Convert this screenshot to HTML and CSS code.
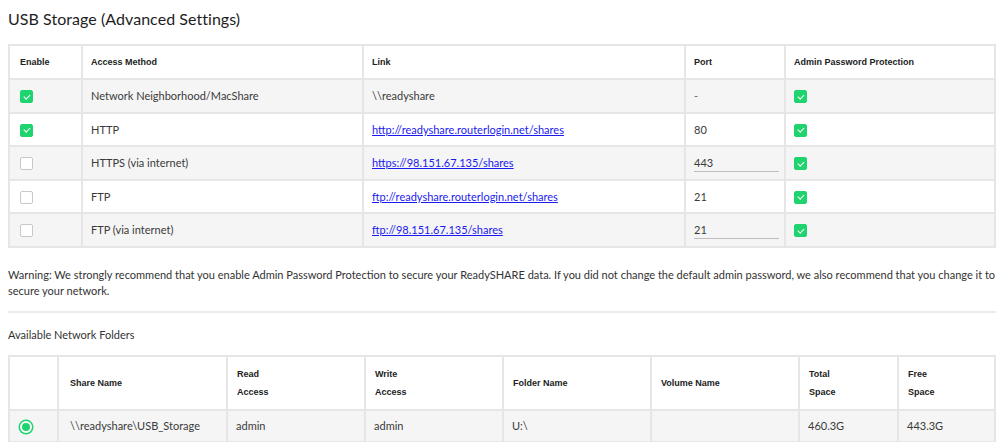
FILE: index.html
```html
<!DOCTYPE html>
<html>
<head>
<meta charset="utf-8">
<link rel="stylesheet" href="styles.css">
</head>
<body>
<div class="page">
  <h1 class="title">USB Storage (Advanced Settings)</h1>
  <table class="grid methods">
    <colgroup>
      <col style="width:73px"><col style="width:281px"><col style="width:322px"><col style="width:100px"><col>
    </colgroup>
    <thead>
      <tr><th class="first">Enable</th><th>Access Method</th><th>Link</th><th>Port</th><th>Admin Password Protection</th></tr>
    </thead>
    <tbody>
      <tr class="alt"><td class="first"><span class="cb on"></span></td><td>Network Neighborhood/MacShare</td><td>\\readyshare</td><td class="dash">-</td><td><span class="cb on"></span></td></tr>
      <tr><td class="first"><span class="cb on"></span></td><td>HTTP</td><td><a href="#">http://readyshare.routerlogin.net/shares</a></td><td>80</td><td><span class="cb on"></span></td></tr>
      <tr class="alt"><td class="first"><span class="cb"></span></td><td>HTTPS (via internet)</td><td><a href="#">https://98.151.67.135/shares</a></td><td><span class="port">443</span></td><td><span class="cb on"></span></td></tr>
      <tr><td class="first"><span class="cb"></span></td><td>FTP</td><td><a href="#">ftp://readyshare.routerlogin.net/shares</a></td><td>21</td><td><span class="cb on"></span></td></tr>
      <tr class="alt"><td class="first"><span class="cb"></span></td><td>FTP (via internet)</td><td><a href="#">ftp://98.151.67.135/shares</a></td><td><span class="port">21</span></td><td><span class="cb on"></span></td></tr>
    </tbody>
  </table>
  <p class="warning">Warning: We strongly recommend that you enable Admin Password Protection to secure your ReadySHARE data. If you did not change the default admin password, we also recommend that you change it to secure your network.</p>
  <hr class="sep">
  <p class="subtitle">Available Network Folders</p>
  <table class="grid folders">
    <colgroup>
      <col style="width:49px"><col style="width:169px"><col style="width:138px"><col style="width:138px"><col style="width:148px"><col style="width:148px"><col style="width:99px"><col>
    </colgroup>
    <thead>
      <tr><th></th><th class="share">Share Name</th><th>Read<br>Access</th><th>Write<br>Access</th><th class="mid">Folder Name</th><th class="mid">Volume Name</th><th>Total<br>Space</th><th>Free<br>Space</th></tr>
    </thead>
    <tbody>
      <tr class="alt"><td class="first"><span class="radio"></span></td><td class="share">\\readyshare\USB_Storage</td><td>admin</td><td>admin</td><td>U:\</td><td></td><td>460.3G</td><td>443.3G</td></tr>
    </tbody>
  </table>
</div>
</body>
</html>
```
FILE: styles.css
```css
html, body {
  margin: 0;
  padding: 0;
  background: #ffffff;
}
body {
  font-family: Lato, "Liberation Sans", sans-serif;
  color: #3a3a3a;
}
.page {
  padding: 0 3px 0 8px;
}
.title {
  margin: 0;
  padding-top: 9px;
  height: 44px;
  box-sizing: border-box;
  font-size: 16px;
  line-height: 20px;
  font-weight: 400;
  color: #1e1e1e;
  letter-spacing: 0.05px;
}
.grid {
  width: 988px;
  border-collapse: collapse;
  table-layout: fixed;
  font-size: 11px;
}
.grid th, .grid td {
  border: 2px solid #e6e6e6;
  text-align: left;
  padding: 0 8px;
}
.grid th {
  font-family: "Liberation Sans", Arial, sans-serif;
  font-weight: 700;
  font-size: 9px;
  color: #222222;
}
.grid th.first, .grid td.first {
  padding-left: 10px;
}
.methods th {
  height: 32px;
}
.methods td {
  height: 31.5px;
}
.grid tr.alt td {
  background: #f5f5f5;
}
.grid a {
  color: #1a1aee;
  text-decoration: underline;
}
.dash {
  color: #666;
}
.cb {
  display: inline-block;
  width: 11px;
  height: 11px;
  border: 1px solid #c8c8c8;
  border-radius: 2px;
  background: #ffffff;
  vertical-align: middle;
  position: relative;
}
.cb.on {
  background: #1fd46e;
  border-color: #1fd46e;
}
.cb.on::after {
  content: "";
  position: absolute;
  left: 3.5px;
  top: 1.5px;
  width: 2.5px;
  height: 5px;
  border: solid #ffffff;
  border-width: 0 1.5px 1.5px 0;
  transform: rotate(45deg);
}
.port {
  display: block;
  width: 85px;
  border-bottom: 1px solid #bdbdbd;
  padding-bottom: 2px;
  margin-top: 2px;
}
.warning {
  margin: 19px 0 0 0;
  font-size: 11px;
  line-height: 16px;
  color: #333333;
}
.sep {
  margin: 12px 0 0 0;
  border: 0;
  border-top: 2px solid #e8eceb;
  width: 988px;
}
.subtitle {
  margin: 0;
  height: 42px;
  padding-top: 15px;
  box-sizing: border-box;
  font-size: 11px;
  color: #333333;
}
.folders th {
  height: 52px;
  line-height: 18px;
  padding-left: 9px;
}
.folders th.share, .folders td.share {
  padding-left: 11px;
}
.folders td {
  height: 30px;
}
.radio {
  display: inline-block;
  width: 8px;
  height: 8px;
  border-radius: 50%;
  background: #1fd46e;
  border: 2px solid #ffffff;
  box-shadow: 0 0 0 1.5px #1fd46e;
  vertical-align: middle;
}
```
